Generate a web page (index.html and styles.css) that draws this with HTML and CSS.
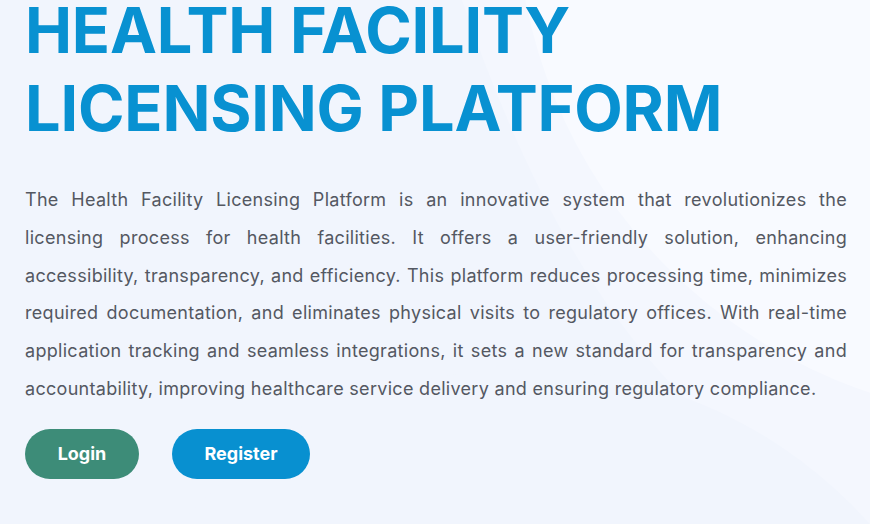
FILE: index.html
```html
<!DOCTYPE html>
<html lang="en">
<head>
<meta charset="utf-8">
<title>Health Facility Licensing Platform</title>
<link rel="stylesheet" href="styles.css">
</head>
<body>
<div class="page">
  <svg class="backdrop" width="870" height="524" viewBox="0 0 870 524" aria-hidden="true">
    <path class="tone-b" d="M462 0 C 520 170 600 330 720 430 L 870 560 L 870 0 Z"/>
    <circle class="tone-a" cx="1033" cy="-98" r="517"/>
    <circle class="tone-base" cx="525" cy="830" r="461"/>
  </svg>
  <main class="hero">
    <h1 class="title">HEALTH FACILITY<br>LICENSING PLATFORM</h1>
    <p class="intro">
      <span class="line">The Health Facility Licensing Platform is an innovative system that revolutionizes the</span>
      <span class="line">licensing process for health facilities. It offers a user-friendly solution, enhancing</span>
      <span class="line">accessibility, transparency, and efficiency. This platform reduces processing time, minimizes</span>
      <span class="line">required documentation, and eliminates physical visits to regulatory offices. With real-time</span>
      <span class="line">application tracking and seamless integrations, it sets a new standard for transparency and</span>
      <span class="line last">accountability, improving healthcare service delivery and ensuring regulatory compliance.</span>
    </p>
    <div class="actions">
      <a class="btn btn-login" href="#">Login</a>
      <a class="btn btn-register" href="#">Register</a>
    </div>
  </main>
</div>
</body>
</html>
```
FILE: styles.css
```css
html, body {
  margin: 0;
  padding: 0;
}
body {
  background: #f1f5fd;
  font-family: Inter, "Liberation Sans", sans-serif;
  overflow: hidden;
}
.page {
  position: relative;
  width: 870px;
  height: 524px;
  overflow: hidden;
  background: #f1f5fd;
}
.backdrop {
  position: absolute;
  left: 0;
  top: 0;
  z-index: 0;
}
.tone-b { fill: #f4f7fe; }
.tone-a { fill: #f8faff; }
.tone-base { fill: #f1f5fd; }
.hero {
  position: relative;
  z-index: 1;
  padding: 0 23px 0 25px;
}
.title {
  margin: -9px 0 0 0;
  font-size: 63px;
  line-height: 78px;
  font-weight: 700;
  color: #0891d1;
  letter-spacing: -0.2px;
}
.intro {
  margin: 34px 0 0 0;
  font-size: 18px;
  line-height: 37.8px;
  letter-spacing: 0.3px;
  color: #545862;
  text-align: justify;
}
.line {
  display: block;
  text-align: justify;
  text-align-last: justify;
}
.line.last {
  text-align-last: left;
}
.actions {
  display: flex;
  gap: 33px;
  margin-top: 21px;
}
.btn {
  display: flex;
  align-items: center;
  justify-content: center;
  height: 50px;
  border-radius: 25px;
  color: #ffffff;
  font-size: 18px;
  font-weight: 700;
  text-decoration: none;
}
.btn-login {
  width: 114px;
  background: #3d8c78;
}
.btn-register {
  width: 138px;
  background: #0890d0;
}
```
